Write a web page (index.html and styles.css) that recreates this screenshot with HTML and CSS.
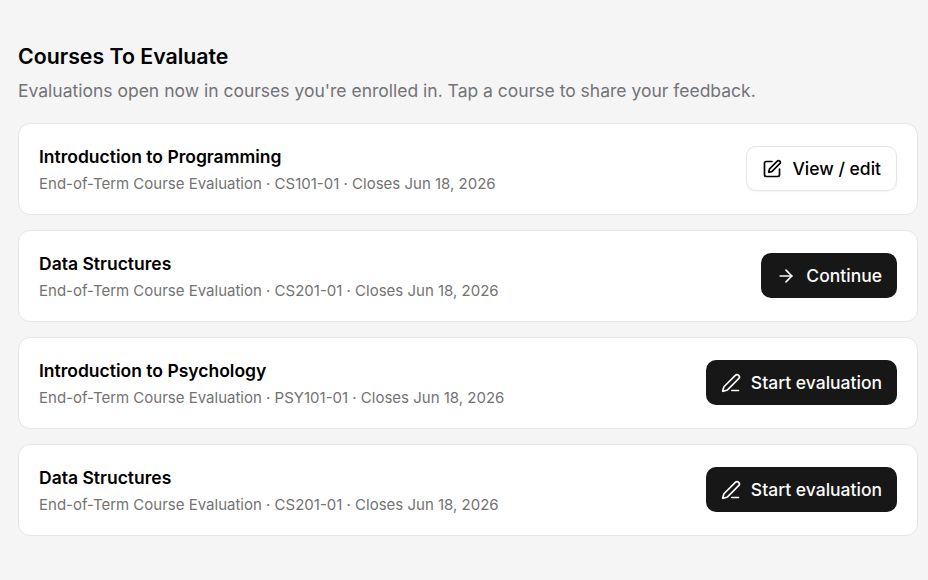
FILE: index.html
```html
<!DOCTYPE html>
<html lang="en">
<head>
    <meta charset="UTF-8">
    <title>Courses To Evaluate</title>
    <link rel="stylesheet" href="styles.css">
</head>
<body>
    <main class="page">
        <h1 class="title">Courses To Evaluate</h1>
        <p class="subtitle">Evaluations open now in courses you're enrolled in. Tap a course to share your feedback.</p>
        <div class="course-list">
            <div class="course-card">
                <div class="course-info">
                    <div class="course-name">Introduction to Programming</div>
                    <div class="course-meta">End-of-Term Course Evaluation · CS101-01 · Closes Jun 18, 2026</div>
                </div>
                <button class="btn btn-outline">
                    <svg class="icon" viewBox="0 0 24 24"><path d="M12 3H5a2 2 0 0 0-2 2v14a2 2 0 0 0 2 2h14a2 2 0 0 0 2-2v-7"/><path d="M18.375 2.625a1 1 0 0 1 3 3l-9.013 9.014a2 2 0 0 1-.853.505l-2.873.84a.5.5 0 0 1-.62-.62l.84-2.873a2 2 0 0 1 .506-.852z"/></svg>
                    View / edit
                </button>
            </div>
            <div class="course-card">
                <div class="course-info">
                    <div class="course-name">Data Structures</div>
                    <div class="course-meta">End-of-Term Course Evaluation · CS201-01 · Closes Jun 18, 2026</div>
                </div>
                <button class="btn btn-dark">
                    <svg class="icon" viewBox="0 0 24 24"><path d="M5 12h14"/><path d="m12 5 7 7-7 7"/></svg>
                    Continue
                </button>
            </div>
            <div class="course-card">
                <div class="course-info">
                    <div class="course-name">Introduction to Psychology</div>
                    <div class="course-meta">End-of-Term Course Evaluation · PSY101-01 · Closes Jun 18, 2026</div>
                </div>
                <button class="btn btn-dark">
                    <svg class="icon" viewBox="0 0 24 24"><path d="M13 21h8"/><path d="M21.174 6.812a1 1 0 0 0-3.986-3.987L3.842 16.174a2 2 0 0 0-.5.83l-1.321 4.352a.5.5 0 0 0 .623.622l4.353-1.32a2 2 0 0 0 .83-.497z"/></svg>
                    Start evaluation
                </button>
            </div>
            <div class="course-card">
                <div class="course-info">
                    <div class="course-name">Data Structures</div>
                    <div class="course-meta">End-of-Term Course Evaluation · CS201-01 · Closes Jun 18, 2026</div>
                </div>
                <button class="btn btn-dark">
                    <svg class="icon" viewBox="0 0 24 24"><path d="M13 21h8"/><path d="M21.174 6.812a1 1 0 0 0-3.986-3.987L3.842 16.174a2 2 0 0 0-.5.83l-1.321 4.352a.5.5 0 0 0 .623.622l4.353-1.32a2 2 0 0 0 .83-.497z"/></svg>
                    Start evaluation
                </button>
            </div>
        </div>
    </main>
</body>
</html>
```

FILE: styles.css
```css
body {
    margin: 0;
    background-color: #f5f5f5;
    font-family: Inter, "Noto Sans", sans-serif;
    color: #000;
}
.page {
    padding: 42px 10px 0 18px;
}
.title {
    margin: 0;
    font-size: 21.3px;
    line-height: 28px;
    font-weight: 600;
}
.subtitle {
    margin: 9px 0 0;
    font-size: 17.5px;
    line-height: 24px;
    color: #737378;
}
.course-list {
    display: flex;
    flex-direction: column;
    gap: 15px;
    margin-top: 20px;
}
.course-card {
    display: flex;
    align-items: center;
    justify-content: space-between;
    height: 92px;
    box-sizing: border-box;
    padding: 0 20px;
    background-color: #fff;
    border: 1px solid #e5e5e5;
    border-radius: 12px;
}
.course-name {
    font-size: 17.5px;
    line-height: 24px;
    font-weight: 600;
}
.course-meta {
    margin-top: 5px;
    font-size: 15px;
    line-height: 20px;
    color: #737373;
}
.btn {
    display: flex;
    align-items: center;
    gap: 10px;
    height: 45px;
    box-sizing: border-box;
    margin-bottom: 1px;
    padding: 0 15px;
    border-radius: 10px;
    font-family: inherit;
    font-size: 17.5px;
    font-weight: 500;
}
.btn-outline {
    background-color: #fff;
    color: #000;
    border: 1px solid #e5e5e5;
    box-shadow: 0 1px 2px rgba(0, 0, 0, 0.05);
}
.btn-dark {
    background-color: #171717;
    color: #fafafa;
    border: none;
}
.icon {
    width: 20px;
    height: 20px;
    fill: none;
    stroke: currentColor;
    stroke-width: 2;
    stroke-linecap: round;
    stroke-linejoin: round;
}
```
